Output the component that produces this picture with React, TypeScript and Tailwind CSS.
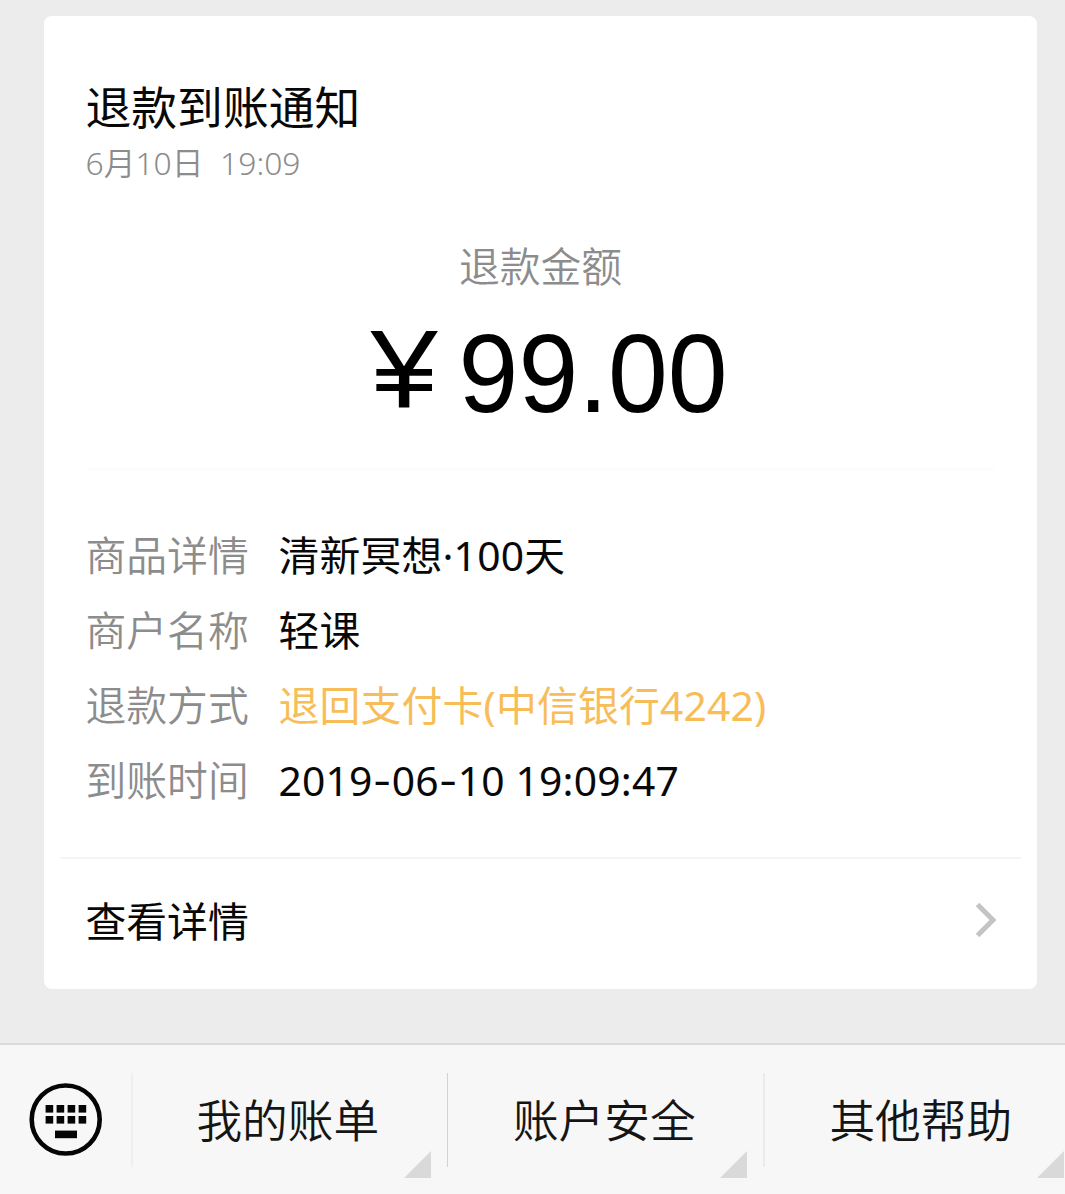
type Row = { label: string; value: string; highlight?: boolean }

const rows: Row[] = [
  { label: '商品详情', value: '清新冥想·100天' },
  { label: '商户名称', value: '轻课' },
  { label: '退款方式', value: '退回支付卡(中信银行4242)', highlight: true },
  { label: '到账时间', value: '2019-06-10 19:09:47' },
]

const menus = [
  { name: '我的账单', divider: 'w-0.5 bg-[#efefef]' },
  { name: '账户安全', divider: '-ml-px w-px bg-[#d2d2d2]' },
  { name: '其他帮助', divider: '-ml-px w-0.5 bg-[#ebebeb]' },
]

// Dashes use the wider Inter glyph
function Mixed({ text }: { text: string }) {
  return (
    <>
      {text.split(/(-)/).map((part, i) =>
        part === '-' ? <span key={i} className="font-['Inter']">-</span> : part
      )}
    </>
  )
}

function KeyboardIcon() {
  return (
    <svg width="74" height="74" viewBox="0 0 74 74" className="block">
      <circle cx="36.7" cy="36.5" r="34" fill="none" stroke="#050505" strokeWidth="4.6" />
      {[0, 1].map(r => [0, 1, 2, 3].map(c => (
        <rect key={`${r}-${c}`} x={16.6 + c * 11} y={22 + r * 11} width="7.6" height="7.6" fill="#050505" />
      )))}
      <rect x="26" y="47.6" width="22" height="7.6" fill="#050505" />
    </svg>
  )
}

export default function App() {
  return (
    <div className="flex h-[1194px] w-[1065px] flex-col overflow-hidden bg-[#ececec] font-['Noto_Sans','Noto_Sans_CJK_SC',sans-serif] font-normal text-[#080808]">
      <main className="flex-1 pt-4 pr-7 pl-11">
        <article className="flex h-[973px] flex-col rounded-lg bg-white">
          <header className="px-[41.5px] pt-[62px]">
            <h1 className="text-[45.8px] leading-[58px]">退款到账通知</h1>
            <p className="mt-[7px] text-[31.8px] leading-[40px] font-[350] whitespace-pre text-[#8c8c8c]">6月10日  19:09</p>
          </header>

          {/* Importe */}
          <section className="mt-[59px] flex flex-col items-center">
            <p className="text-[40.8px] leading-[48px] font-[350] text-[#8c8c8c]">退款金额</p>
            <p className="mt-[23px] ml-[25px] flex h-[120px] items-start gap-[18px] font-['Liberation_Sans',sans-serif] text-[112px] leading-[120px] text-black">
              <span className="-mt-[3px] scale-x-108">¥</span>
              <span className="mt-px scale-x-96">99.00</span>
            </p>
          </section>

          <hr className="mx-[42px] mt-[35px] border-t-2 border-[#fcfcfc]" />

          <dl className="mt-12 flex flex-col px-[41.5px] text-[40.8px] leading-[75px]">
            {rows.map(row => (
              <div key={row.label} className="flex gap-[29px]">
                <dt className="w-[164px] font-[350] text-[#8c8c8c]">{row.label}</dt>
                <dd className={row.highlight ? 'tracking-[0.2px] text-[#f7bd58]' : 'tracking-[0.2px]'}><Mixed text={row.value} /></dd>
              </div>
            ))}
          </dl>

          <button type="button" className="mx-4 mt-auto flex h-[132px] items-center justify-between border-t-2 border-[#f5f5f5] pr-6 pb-[9px] pl-[25.5px] text-[40.8px]">
            <span className="pt-1">查看详情</span>
            <svg width="22" height="36" viewBox="0 0 22 36" fill="none" stroke="#c4c4c4" strokeWidth="5">
              <path d="M2.5 2.5 18 18 2.5 33.5" />
            </svg>
          </button>
        </article>
      </main>

      <nav className="flex h-[151px] border-t-2 border-[#dadada] bg-[#f7f7f7]">
        <div className="flex w-[131px] shrink-0 items-center justify-center">
          <KeyboardIcon />
        </div>
        {menus.map(menu => (
          <button key={menu.name} type="button" className="relative flex w-[316.5px] shrink-0 items-center justify-center pt-0.5 pr-[3px] text-[45.7px] font-[350] text-[#151515]">
            <span className={`absolute top-7 left-0 h-[94px] ${menu.divider}`} />
            <span>{menu.name}</span>
            <svg className="absolute right-[17px] bottom-4" width="27" height="27" viewBox="0 0 27 27">
              <path d="M27 0V27H0Z" fill="#d9d9d9" />
            </svg>
          </button>
        ))}
      </nav>
    </div>
  )
}
